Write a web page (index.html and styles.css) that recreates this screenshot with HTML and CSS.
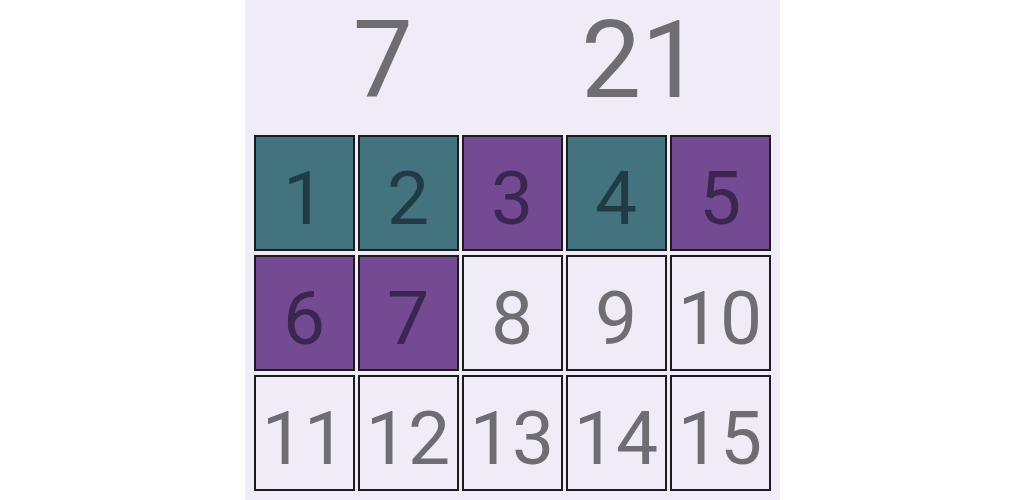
FILE: index.html
```html
<!DOCTYPE html>
<html lang="en">
<head>
    <meta charset="UTF-8">
    <meta name="viewport" content="width=device-width, initial-scale=1.0">
    <title>Числа</title>
    <link rel="stylesheet" href="styles.css">
</head>
<body>
    <div id="panel">
        <div id="header">
            <div class="score">7</div>
            <div class="score">21</div>
        </div>
        <div id="board">
            <div class="cell teal">1</div>
            <div class="cell teal">2</div>
            <div class="cell purple">3</div>
            <div class="cell teal">4</div>
            <div class="cell purple">5</div>
            <div class="cell purple">6</div>
            <div class="cell purple">7</div>
            <div class="cell">8</div>
            <div class="cell">9</div>
            <div class="cell">10</div>
            <div class="cell">11</div>
            <div class="cell">12</div>
            <div class="cell">13</div>
            <div class="cell">14</div>
            <div class="cell">15</div>
        </div>
    </div>
</body>
</html>
```

FILE: styles.css
```css
body {
    margin: 0;
    background: #ffffff;
    font-family: Roboto, "Liberation Sans", sans-serif;
}
#panel {
    width: 535px;
    height: 500px;
    margin: 0 auto;
    padding: 0 9px;
    box-sizing: border-box;
    background-color: #efecf7;
}
#header {
    display: flex;
    height: 135px;
    padding-top: 7px;
    box-sizing: border-box;
}
.score {
    flex: 1;
    text-align: center;
    font-size: 107px;
    line-height: 107px;
    color: #6e6e72;
}
#board {
    display: grid;
    grid-template-columns: repeat(5, 101px);
    grid-template-rows: repeat(3, 116px);
    gap: 4px 3px;
}
.cell {
    border: 2px solid #1c1c1e;
    box-sizing: border-box;
    padding-top: 10px;
    line-height: 102px;
    font-size: 75px;
    text-align: center;
    color: #6e6e72;
}
.teal {
    background-color: #42737f;
    color: #213a46;
}
.purple {
    background-color: #744b93;
    color: #3a2650;
}
```
